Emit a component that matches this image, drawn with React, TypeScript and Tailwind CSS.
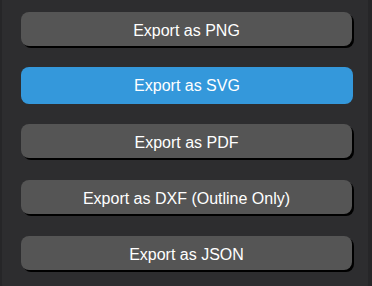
import React from "react";

const items = [
  { label: "Export as PNG", active: false },
  { label: "Export as SVG", active: true },
  { label: "Export as PDF", active: false },
  { label: "Export as DXF (Outline Only)", active: false },
  { label: "Export as JSON", active: false },
];

export default function App() {
  return (
    <div className="w-[372px] h-[286px] overflow-hidden bg-[#262628]" style={{ fontFamily: '"Liberation Sans", Arial, sans-serif' }}>
      <div className="ml-[2px] w-[366px] h-[296px] rounded-[12px] rounded-t-none bg-[#2d2d2f] pt-[12px] pl-[19px] flex flex-col gap-[20px]">
        {items.map((it) => (
          <button
            key={it.label}
            className={
              it.active
                ? "-mt-[1px] w-[332px] h-[37px] pt-[1px] rounded-[8px] bg-[#3498db] text-white text-[16px] flex items-center justify-center"
                : "w-[331px] h-[34px] mb-[2px] pt-[3px] rounded-[8px] bg-[#555555] text-white text-[16px] flex items-center justify-center shadow-[2px_2px_0_#000]"
            }
          >
            {it.label}
          </button>
        ))}
      </div>
    </div>
  );
}
